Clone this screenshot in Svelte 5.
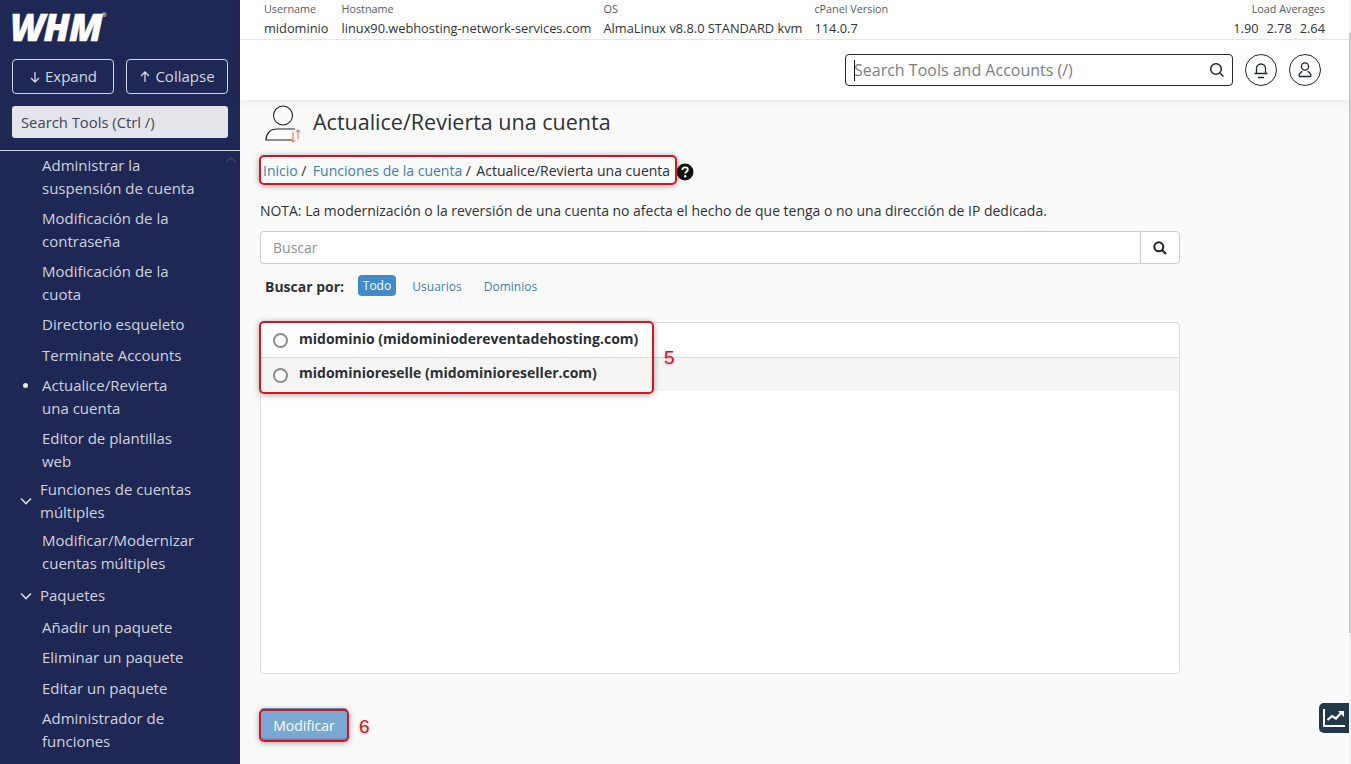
<script>
  const nav = [
    { t: ['Administrar la', 'suspensión de cuenta'], c: '' },
    { t: ['Modificación de la', 'contraseña'], c: '' },
    { t: ['Modificación de la', 'cuota'], c: '' },
    { t: ['Directorio esqueleto'], c: '' },
    { t: ['Terminate Accounts'], c: '' },
    { t: ['Actualice/Revierta', 'una cuenta'], c: 'on' },
    { t: ['Editor de plantillas', 'web'], c: '' },
    { t: ['Funciones de cuentas', 'múltiples'], c: 'group g1' },
    { t: ['Modificar/Modernizar', 'cuentas múltiples'], c: '' },
    { t: ['Paquetes'], c: 'group g2' },
    { t: ['Añadir un paquete'], c: '' },
    { t: ['Eliminar un paquete'], c: '' },
    { t: ['Editar un paquete'], c: '' },
    { t: ['Administrador de', 'funciones'], c: '' }
  ];
  const info = [
    ['Username', 'midominio'],
    ['Hostname', 'linux90.webhosting-network-services.com'],
    ['OS', 'AlmaLinux v8.8.0 STANDARD kvm'],
    ['cPanel Version', '114.0.7']
  ];
</script>

<div class="page">
  <aside class="side">
    <div class="logo">WHM<sup>®</sup></div>
    <div class="btns">
      <button class="sbtn">
        <svg width="12" height="12" viewBox="0 0 12 12"><path d="M6 1v10M2 7l4 4 4-4" fill="none" stroke="#d6d8e2" stroke-width="1.3"/></svg>
        Expand
      </button>
      <button class="sbtn">
        <svg width="12" height="12" viewBox="0 0 12 12"><path d="M6 11V1M2 5l4-4 4 4" fill="none" stroke="#d6d8e2" stroke-width="1.3"/></svg>
        Collapse
      </button>
    </div>
    <div class="ssearch">Search Tools (Ctrl /)</div>
    <nav class="nav">
      <svg class="navup" width="12" height="8" viewBox="0 0 12 8"><path d="M1 6l5-4 5 4" fill="none" stroke="#39426c" stroke-width="1.6"/></svg>
      {#each nav as n}
        <div class="item {n.c}">
          {#if n.c.includes('group')}
            <svg class="chev" width="12" height="8" viewBox="0 0 12 8"><path d="M1 1.5l5 5 5-5" fill="none" stroke="#d6d8e2" stroke-width="1.6"/></svg>
          {/if}
          <div>{#each n.t as l}<div>{l}</div>{/each}</div>
        </div>
      {/each}
    </nav>
  </aside>

  <div class="right">
    <header class="head">
      <div class="info">
        {#each info as i}
          <div class="cell"><span class="lab">{i[0]}</span><span class="val">{i[1]}</span></div>
        {/each}
        <div class="cell load"><span class="lab">Load Averages</span><span class="val wide">1.90&nbsp; 2.78&nbsp; 2.64</span></div>
      </div>
      <div class="tools">
        <div class="tsearch">
          <span class="caret"></span>
          <span class="ph">Search Tools and Accounts (/)</span>
          <svg width="16" height="16" viewBox="0 0 16 16"><circle cx="7" cy="7" r="5.3" fill="none" stroke="#1f2937" stroke-width="1.5"/><path d="M11 11l3.5 3.500" stroke="#1f2937" stroke-width="1.5"/></svg>
        </div>
        <div class="round">
          <svg width="18" height="18" viewBox="0 0 18 18"><path d="M2.500 12.500h13M4.500 12.500V7.500a4.500 4.500 0 0 1 9 0v5M6 16.500h6" fill="none" stroke="#1f2937" stroke-width="1.300"/></svg>
        </div>
        <div class="round">
          <svg width="18" height="18" viewBox="0 0 18 18"><circle cx="9" cy="5.500" r="3.600" fill="none" stroke="#1f2937" stroke-width="1.300"/><path d="M3 15.500c0-2.800 1.500-4.500 3.500-5.200M15 15.500c0-2.800-1.500-4.500-3.500-5.200M3 15.500h12" fill="none" stroke="#1f2937" stroke-width="1.300"/></svg>
        </div>
      </div>
    </header>

    <main class="main">
      <div class="title">
        <svg class="ticon" width="38" height="40" viewBox="0 0 38 40">
          <circle cx="18" cy="11.500" r="9.500" fill="none" stroke="#222" stroke-width="1.100"/>
          <path d="M30 25H12C5 25 1 30 1 36h26" fill="none" stroke="#222" stroke-width="1.100"/>
          <path d="M33 35V26M31 28l2-2 2 2M28 28v10M26 36l2 2 2-2" fill="none" stroke="#e8926f" stroke-width="1.400"/>
        </svg>
        <h1>Actualice/Revierta una cuenta</h1>
      </div>
      <div class="crumbs">
        <a href="#a">Inicio</a><span class="sep">/</span><a href="#a">Funciones de la cuenta</a><span class="sep sep2">/</span><span>Actualice/Revierta una cuenta</span>
        <svg class="help" width="18" height="18" viewBox="0 0 18 18"><circle cx="9" cy="9" r="8.500" fill="#111"/><path d="M6.300 7c0-1.700 1.200-2.600 2.800-2.600s2.700 1 2.700 2.300c0 2-2.600 2-2.600 3.700" fill="none" stroke="#fff" stroke-width="1.900"/><circle cx="9.200" cy="13.300" r="1.200" fill="#fff"/></svg>
      </div>
      <p class="note">NOTA: La modernización o la reversión de una cuenta no afecta el hecho de que tenga o no una dirección de IP dedicada.</p>
      <div class="search">
        <div class="field">Buscar</div>
        <div class="sbox">
          <svg width="14" height="14" viewBox="0 0 14 14"><circle cx="5.800" cy="5.800" r="4.500" fill="none" stroke="#222" stroke-width="2"/><path d="M9 9l4 4" stroke="#222" stroke-width="2.200"/></svg>
        </div>
      </div>
      <div class="by">
        <b>Buscar por:</b>
        <span class="pill">Todo</span>
        <span class="opt o1">Usuarios</span>
        <span class="opt">Dominios</span>
      </div>
      <div class="list">
        <label class="row"><span class="radio"></span><b>midominio (midominiodereventadehosting.com)</b></label>
        <label class="row alt"><span class="radio"></span><b>midominioreselle (midominioreseller.com)</b></label>
      </div>
      <button class="go">Modificar</button>

      <div class="mark m1"></div>
      <div class="mark m2"></div>
      <div class="mark m3"></div>
      <span class="num n5">5</span>
      <span class="num n6">6</span>
    </main>

    <div class="stats">
      <svg width="22" height="18" viewBox="0 0 22 18"><path d="M1 0v17h21" fill="none" stroke="#fff" stroke-width="2"/><path d="M4.500 11l4.500-4 4 2.500 5-5.500" fill="none" stroke="#fff" stroke-width="2.200"/><path d="M15 2h6v6z" fill="#fff"/></svg>
    </div>
    <div class="track"><div class="thumb"></div></div>
  </div>
</div>

<style>
  :global(body) { margin: 0; }
  * { box-sizing: border-box; }
  .page {
    display: flex; width: 1351px; height: 764px; overflow: hidden;
    font-family: "Open Sans", "Liberation Sans", sans-serif; color: #2b2f36; background: #fafafa;
  }
  .side { width: 240px; flex: none; background: #1f2855; color: #cfd2de; display: flex; flex-direction: column; }
  .logo {
    margin: 7px 0 0 10px; height: 40px; color: #fff; font-size: 37px; line-height: 39px;
    font-weight: 800; font-style: italic; letter-spacing: -1px; -webkit-text-stroke: 0.4px #fff;
  }
  .logo sup { font-size: 6px; font-style: normal; font-weight: 400; vertical-align: 24px; line-height: 0; -webkit-text-stroke: 0; }
  .btns { display: flex; gap: 12px; margin: 12px 12px 0; }
  .sbtn {
    flex: 1; height: 35px; background: transparent; border: 1px solid #d3d6e0; border-radius: 4px;
    color: #d3d6e0; font: 15px/1 "Open Sans", sans-serif; display: flex; align-items: center; justify-content: center; gap: 4px; padding: 0;
  }
  .ssearch {
    margin: 12px 12px 0; height: 32px; background: #e4e5ea; border-radius: 3px;
    color: #3d4460; font-size: 14.800px; line-height: 33px; padding-left: 9px;
  }
  .nav { margin-top: 12px; border-top: 1px solid #c6c9d6; padding-top: 3px; position: relative; flex: 1; overflow: hidden; }
  .navup { position: absolute; right: 3px; top: 5px; }
  .item { padding: 0 30px 0 42px; font-size: 15px; line-height: 22.800px; margin-bottom: 7.500px; position: relative; }
  .item.on::before { content: ""; position: absolute; left: 23px; top: 9px; width: 5px; height: 5px; border-radius: 50%; background: #e5e6ec; }
  .item.group { padding-left: 40px; }
  .g1 { margin-top: -2px; margin-bottom: 5.400px; }
  .g2 { margin-top: 9.500px; margin-bottom: 9px; }
  .chev { position: absolute; left: 20px; top: 50%; margin-top: -4px; }
  .right { flex: 1; min-width: 0; position: relative; display: flex; flex-direction: column; }
  .head { background: #fff; height: 100px; flex: none; box-shadow: 0 1px 8px rgba(0, 0, 0, .08); position: relative; z-index: 1; }
  .info { height: 40px; border-bottom: 1px solid #e6e6e6; display: flex; padding: 0 26px 0 24px; gap: 12px; }
  .cell { display: flex; flex-direction: column; }
  .cell:first-child { margin-right: 1px; }
  .lab { font-size: 10.800px; line-height: 14px; margin-top: 2px; color: #545b64; }
  .val { font-size: 12.800px; line-height: 18px; margin-top: 3px; color: #30343a; }
  .wide { word-spacing: 0.600px; }
  .load { margin-left: auto; align-items: flex-end; }
  .tools { display: flex; align-items: center; height: 60px; justify-content: flex-end; padding-right: 30px; gap: 12px; }
  .tsearch {
    width: 388px; height: 32px; border: 1px solid #1f2937; border-radius: 4px; display: flex; align-items: center;
    padding: 0 7px 0 8px; position: relative;
  }
  .caret { position: absolute; left: 8px; top: 5px; width: 1px; height: 21px; background: #111; }
  .ph { flex: 1; font-size: 16px; color: #7b7f85; }
  .round { width: 32px; height: 32px; border: 1px solid #1f2937; border-radius: 50%; display: flex; align-items: center; justify-content: center; }
  .main { flex: 1; padding: 0 0 0 20px; position: relative; width: 960px; }
  .title { display: flex; align-items: center; height: 42px; margin-top: 1px; padding-left: 5px; gap: 10px; }
  .ticon { margin-top: 3px; }
  .title h1 { margin: 0; font-size: 21.500px; font-weight: 400; color: #2f3237; line-height: 42px; }
  .crumbs { display: flex; align-items: center; font-size: 14px; height: 22px; margin: 17px 0 0 3px; line-height: 22px; }
  .crumbs a { color: #3d7fb8; text-decoration: none; }
  .sep { margin: 0 6.500px 0 3.500px; }
  .sep2 { margin-right: 5.500px; }
  .help { margin: 2px 0 0 6px; }
  .note { margin: 20px 0 0; font-size: 13.960px; line-height: 18px; color: #2f3237; }
  .search { display: flex; width: 920px; height: 33px; margin-top: 11px; }
  .field {
    flex: 1; background: #fff; border: 1px solid #ccc; border-right: 0; border-radius: 4px 0 0 4px;
    font-size: 14px; line-height: 31px; padding-left: 12px; color: #8f9296;
  }
  .sbox { width: 40px; background: #fff; border: 1px solid #ccc; border-radius: 0 4px 4px 0; display: flex; align-items: center; justify-content: center; }
  .by { display: flex; align-items: center; height: 22px; margin: 11px 0 0 5px; font-size: 14px; }
  .by b { font-weight: 700; color: #2f3237; }
  .pill { margin: 0 0 2px 14px; background: #428bca; color: #fff; border-radius: 4px; height: 21px; line-height: 21px; padding: 0 4.700px; font-size: 12px; }
  .opt { font-size: 12px; color: #3d7fb8; margin-left: 22px; }
  .opt.o1 { margin-left: 16.500px; }
  .list { width: 920px; height: 352px; margin-top: 25px; background: #fff; border: 1px solid #ddd; border-radius: 4px; }
  .row { display: flex; align-items: center; height: 34px; font-size: 14px; padding-left: 12px; color: #2b2f36; }
  .row b { font-weight: 700; margin: 0 0 3px 11px; }
  .alt { background: #f5f5f5; border-top: 1px solid #ddd; }
  .alt b { margin-bottom: 5px; }
  .radio { width: 15px; height: 15px; border: 2px solid #8a8a90; border-radius: 50%; background: #fff; margin-top: 1px; }
  .go {
    display: block; width: 88px; height: 31px; margin-top: 34px; padding: 3px 0 0; border: 1px solid #6a9cc8; border-radius: 4px;
    background: #79a9d3; color: #fff; font: 14px "Open Sans", sans-serif; box-shadow: 0 2px 0 #5d86b5;
  }
  .mark { position: absolute; border: 2px solid #d9131f; border-radius: 5px; box-shadow: 0 1px 6px rgba(0, 0, 0, .35); pointer-events: none; }
  .m1 { left: 19px; top: 55px; width: 418px; height: 30px; }
  .m2 { left: 19px; top: 221px; width: 395px; height: 73px; }
  .m3 { left: 19px; top: 609px; width: 90px; height: 33px; }
  .num { position: absolute; color: #d9131f; font: 19px "Liberation Sans", sans-serif; text-shadow: 0 1px 3px rgba(0, 0, 0, .25); }
  .n5 { left: 424px; top: 247px; }
  .n6 { left: 119px; top: 616px; }
  .stats {
    position: absolute; left: 1079px; top: 703px; width: 30px; height: 30px; background: #24384c;
    border-radius: 5px 0 0 5px; display: flex; align-items: center; justify-content: center; z-index: 2;
  }
  .track { position: absolute; right: 0; top: 0; width: 2px; height: 764px; background: #f1f1f1; z-index: 3; }
  .thumb { margin-top: 33px; height: 600px; background: #c8c8c8; }
</style>
